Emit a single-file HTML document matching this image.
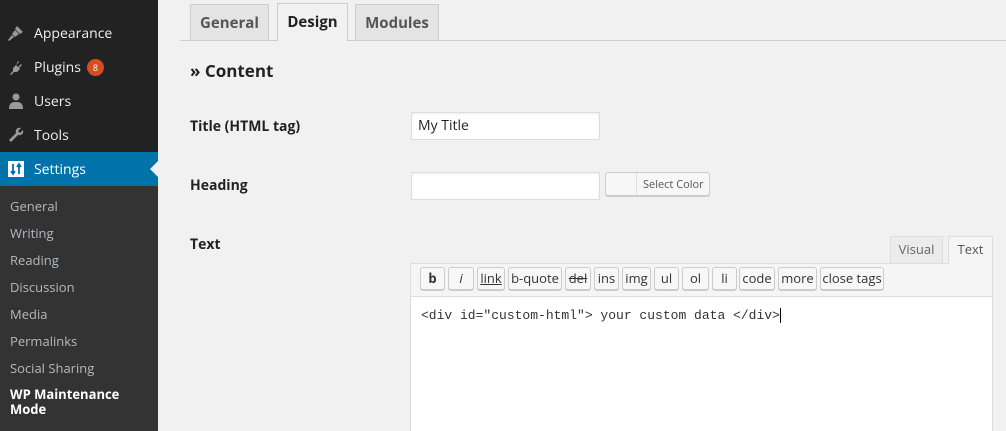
<!DOCTYPE html>
<html style="overflow:hidden;height:431px"><head><style>
body{margin:0;width:1006px;height:431px;overflow:hidden;background:#f1f1f1;font-family:"Open Sans","Liberation Sans",sans-serif;position:relative;color:#222}
.sb{position:absolute;left:0;top:0;width:158px;height:431px;background:#222}
.mi{position:absolute;left:0;width:158px;height:34px;color:#eee;font-size:14px;line-height:34px}
.mi span.t{position:absolute;left:34px;top:1px}
.ic{position:absolute;left:7px;top:8px;width:18px;height:18px}
.sub{position:absolute;left:0;top:186px;width:158px;height:245px;background:#333}
.si{position:absolute;left:10px;font-size:13px;color:#b4b9be}
.tab{position:absolute;top:4px;height:36px;border:1px solid #ccc;border-bottom:none;background:#e4e4e4;font-size:15px;font-weight:bold;color:#555;line-height:36px;text-align:center;box-sizing:border-box}
.lbl{position:absolute;left:190px;font-size:14px;font-weight:bold;color:#222}
.inp{position:absolute;background:#fff;border:1px solid #ddd;box-sizing:border-box;box-shadow:inset 0 1px 2px rgba(0,0,0,.07)}
.btn{position:absolute;top:267px;height:23px;border:1px solid #ccc;border-radius:3px;background:#f7f7f7;box-sizing:border-box;font-size:13px;color:#333;line-height:21px;text-align:center;box-shadow:0 1px 0 #ccc}
</style></head><body>
<div class="sb">
 <div class="mi" style="top:16px"><svg class="ic" viewBox="0 0 18 18"><path d="M10 2l6 6-3 2-5-5z M8 6l4 4-4 3-3-3z M5 11l2 2-5 4-1-1z" fill="#999"/></svg><span class="t">Appearance</span></div>
 <div class="mi" style="top:50px"><svg class="ic" viewBox="0 0 18 18"><path d="M11 3l1 1-3 3 2 2 3-3 1 1-3 3 1 1-3 3-3 0-3 3-1-1 3-3 0-3 3-3z" fill="#999"/></svg><span class="t">Plugins</span><span style="position:absolute;left:87px;top:9px;width:17px;height:17px;border-radius:9px;background:#d54e21;color:#fff;font-size:9px;line-height:17px;text-align:center">8</span></div>
 <div class="mi" style="top:84px"><svg class="ic" viewBox="0 0 18 18"><circle cx="9" cy="5" r="3.5" fill="#999"/><path d="M2 17c0-6 3-7 7-7s7 1 7 7z" fill="#999"/></svg><span class="t">Users</span></div>
 <div class="mi" style="top:118px"><svg class="ic" viewBox="0 0 18 18"><path d="M16 4l-3 3-2-2 3-3c-3-1-6 1-5 5l-7 7 2 2 7-7c4 1 6-2 5-5z" fill="#999"/></svg><span class="t">Tools</span></div>
 <div class="mi" style="top:152px;background:#0073aa;color:#fff"><svg class="ic" viewBox="0 0 18 18"><rect x="1" y="1" width="16" height="16" fill="#fff"/><path d="M6 4v10M4 11l2 3 2-3M12 14V4M10 7l2-3 2 3" stroke="#0073aa" stroke-width="1.8" fill="none"/></svg><span class="t">Settings</span><span style="position:absolute;right:0;top:9px;border:8px solid transparent;border-right-color:#f1f1f1"></span></div>
 <div class="sub">
  <div class="si" style="top:11px">General</div>
  <div class="si" style="top:38px">Writing</div>
  <div class="si" style="top:65px">Reading</div>
  <div class="si" style="top:92px">Discussion</div>
  <div class="si" style="top:119px">Media</div>
  <div class="si" style="top:146px">Permalinks</div>
  <div class="si" style="top:173px">Social Sharing</div>
  <div class="si" style="top:201px;color:#fff;font-weight:bold;line-height:15px">WP Maintenance<br>Mode</div>
 </div>
</div>
<div style="position:absolute;left:180px;top:40px;width:826px;height:1px;background:#ccc"></div>
<div class="tab" style="left:190px;width:79px">General</div>
<div class="tab" style="left:277px;width:71px;top:3px;height:38px;background:#f1f1f1;color:#222">Design</div>
<div class="tab" style="left:355px;width:84px">Modules</div>
<div style="position:absolute;left:190px;top:59px;font-size:17px;font-weight:bold;color:#222">» Content</div>
<div class="lbl" style="top:117px">Title (HTML tag)</div>
<div class="inp" style="left:411px;top:112px;width:189px;height:28px;font-size:14px;padding:5px 6px;line-height:16px">My Title</div>
<div class="lbl" style="top:176px">Heading</div>
<div class="inp" style="left:411px;top:172px;width:189px;height:28px"></div>
<div style="position:absolute;left:605px;top:172px;width:105px;height:24px;border:1px solid #ccc;border-radius:3px;background:#f7f7f7;box-sizing:border-box;box-shadow:0 1px 0 #ccc">
 <div style="position:absolute;left:30px;top:0;bottom:0;width:1px;background:#ddd"></div>
 <div style="position:absolute;left:37px;top:4px;font-size:11px;color:#555">Select Color</div></div>
<div class="lbl" style="top:235px">Text</div>
<div style="position:absolute;left:890px;top:236px;width:53px;height:27px;background:#ebebeb;border:1px solid #ddd;border-bottom:none;box-sizing:border-box;font-size:13px;color:#666;text-align:center;line-height:24px">Visual</div>
<div style="position:absolute;left:948px;top:236px;width:45px;height:28px;background:#f5f5f5;border:1px solid #ddd;border-bottom:none;box-sizing:border-box;font-size:13px;color:#555;text-align:center;line-height:24px;z-index:2">Text</div>
<div style="position:absolute;left:410px;top:263px;width:583px;height:168px;border:1px solid #ddd;border-bottom:none;background:#fff;box-sizing:border-box">
 <div style="height:32px;background:#f5f5f5;border-bottom:1px solid #ddd"></div>
 <div style="position:absolute;left:10px;top:44px;font-family:'Liberation Mono',monospace;font-size:13px;color:#333">&lt;div id="custom-html"&gt; your custom data &lt;/div&gt;<span style="border-left:1px solid #000"></span></div>
</div>
<div class="btn" style="left:420px;width:25px;font-weight:bold">b</div>
<div class="btn" style="left:448px;width:26px;font-style:italic">i</div>
<div class="btn" style="left:477px;width:28px;text-decoration:underline">link</div>
<div class="btn" style="left:508px;width:54px">b-quote</div>
<div class="btn" style="left:565px;width:26px;text-decoration:line-through">del</div>
<div class="btn" style="left:594px;width:25px">ins</div>
<div class="btn" style="left:622px;width:29px">img</div>
<div class="btn" style="left:654px;width:25px">ul</div>
<div class="btn" style="left:682px;width:27px">ol</div>
<div class="btn" style="left:712px;width:25px">li</div>
<div class="btn" style="left:739px;width:36px">code</div>
<div class="btn" style="left:778px;width:39px">more</div>
<div class="btn" style="left:820px;width:64px">close tags</div>
</body></html>
